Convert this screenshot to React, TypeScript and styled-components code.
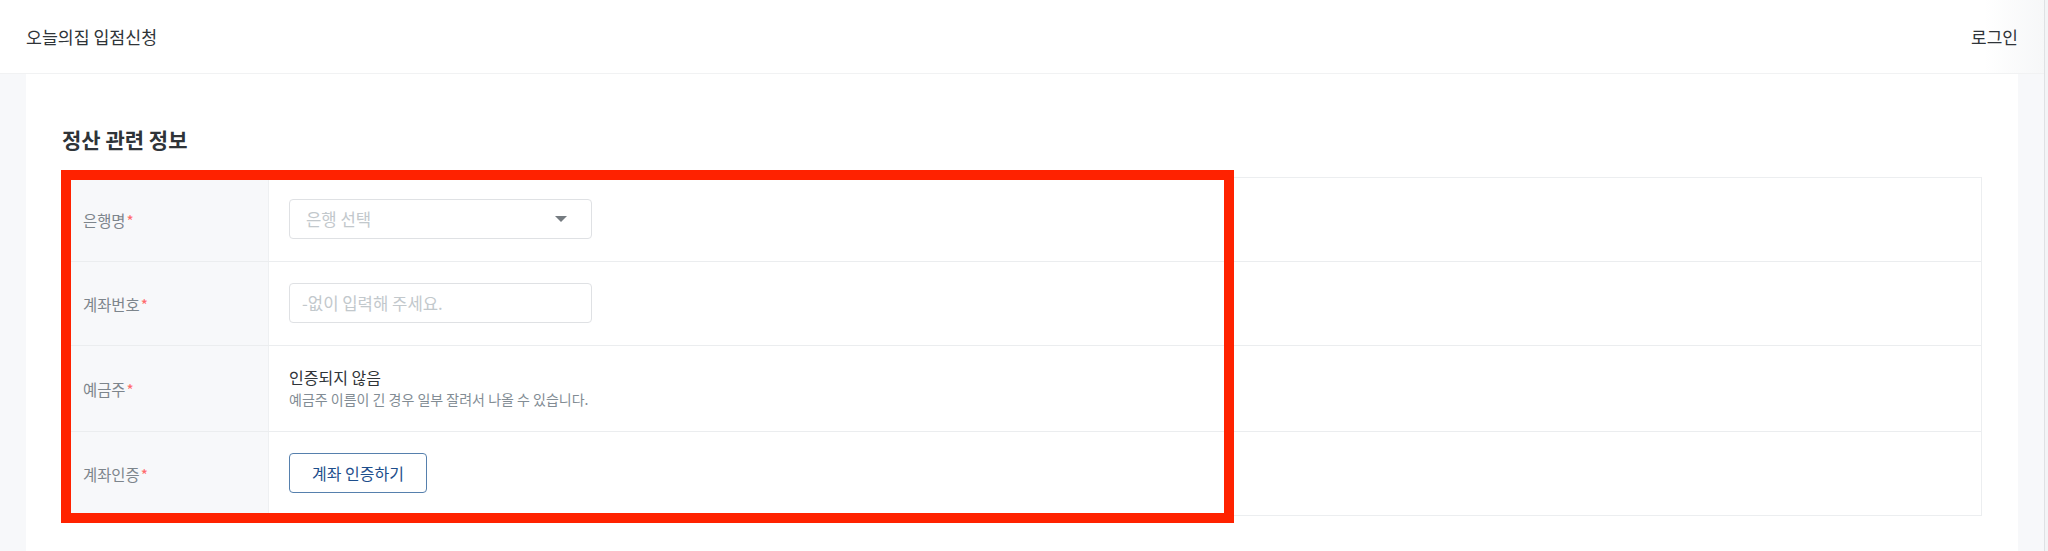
import React from 'react';
import styled, { createGlobalStyle } from 'styled-components';

const GlobalStyle = createGlobalStyle`
  html, body {
    margin: 0;
    padding: 0;
    background: #fff;
  }
  body {
    font-family: 'Noto Sans CJK KR', 'Noto Sans', sans-serif;
    color: #2f3438;
  }
  * {
    box-sizing: border-box;
  }
`;

const Root = styled.div`
  display: flex;
  min-height: 100vh;
`;

const Page = styled.div`
  flex: 1;
  display: flex;
  flex-direction: column;
`;

const Edge = styled.div`
  width: 4px;
  background: #f3f4f6;
  border-left: 1px solid #dfe1e4;
`;

const Header = styled.header`
  height: 74px;
  padding: 0 26px;
  display: flex;
  align-items: center;
  justify-content: space-between;
  background: linear-gradient(to right, #fff 0, #fff calc(100% - 60px), #f6f7f8 100%);
  border-bottom: 1px solid #f1f2f3;
  font-size: 17.3px;
  color: #2f3438;
`;

const HeaderLink = styled.a`
  color: #2f3438;
  text-decoration: none;
  font-size: 17px;
`;

const Main = styled.main`
  flex: 1;
  display: flex;
  background: #f7f8fa;
  padding: 0 26px;
`;

const Panel = styled.section`
  flex: 1;
  background: #fff;
  padding: 51px 36px 0;
`;

const Title = styled.h2`
  margin: 0 0 24px;
  font-size: 21px;
  line-height: 28px;
  font-weight: 700;
  color: #2f3438;
`;

const TableWrap = styled.div`
  position: relative;
`;

const Table = styled.div`
  border: 1px solid #eceef0;
`;

const Row = styled.div`
  display: grid;
  grid-template-columns: 206px 1fr;
  border-bottom: 1px solid #ebedef;
  &:last-child {
    border-bottom: none;
  }
`;

const Label = styled.div`
  display: flex;
  align-items: center;
  padding: 0 20px;
  background: #f7f8fa;
  border-right: 1px solid #eef0f2;
  font-size: 15.4px;
  color: #7d858c;
`;

const Star = styled.span`
  color: #ff6a6a;
  margin-left: 1px;
`;

const Value = styled.div`
  display: flex;
  flex-direction: column;
  justify-content: center;
  align-items: flex-start;
  padding: 21px 20px 22px;
`;

const SelectBox = styled.button`
  width: 303px;
  height: 40px;
  display: flex;
  align-items: center;
  justify-content: space-between;
  padding: 0 24px 0 16px;
  background: #fff;
  border: 1px solid #dfe1e4;
  border-radius: 4px;
  font-family: inherit;
  font-size: 16.7px;
  color: #c2c8cc;
  cursor: pointer;
`;

const TextInput = styled.input`
  width: 303px;
  height: 40px;
  padding: 0 12px;
  border: 1px solid #dfe1e4;
  border-radius: 4px;
  font-family: inherit;
  font-size: 16.7px;
  color: #2f3438;
  outline: none;
  &::placeholder {
    color: #c2c8cc;
  }
`;

const Owner = styled.div`
  font-size: 16px;
  line-height: 21px;
  color: #2f3438;
`;

const Hint = styled.div`
  margin-top: 2px;
  font-size: 14px;
  line-height: 19px;
  color: #828c94;
`;

const VerifyButton = styled.button`
  height: 40px;
  padding: 0 22px;
  background: #fff;
  border: 1px solid #5680ad;
  border-radius: 4px;
  font-family: inherit;
  font-size: 16px;
  color: #1d4e8c;
  cursor: pointer;
`;

const Highlight = styled.div`
  position: absolute;
  top: -7px;
  left: -1px;
  width: 1173px;
  height: 353px;
  border: 10px solid #ff2200;
  pointer-events: none;
`;

const Caret = () => (
  <svg width="12" height="6" viewBox="0 0 12 6">
    <path d="M0 0h12L6 6z" fill="#757b80" />
  </svg>
);

export default function App() {
  return (
    <>
      <GlobalStyle />
      <Root>
        <Page>
          <Header>
            <span>오늘의집 입점신청</span>
            <HeaderLink href="#">로그인</HeaderLink>
          </Header>
          <Main>
            <Panel>
              <Title>정산 관련 정보</Title>
              <TableWrap>
                <Table>
                  <Row>
                    <Label>은행명<Star>*</Star></Label>
                    <Value>
                      <SelectBox type="button">
                        <span>은행 선택</span>
                        <Caret />
                      </SelectBox>
                    </Value>
                  </Row>
                  <Row>
                    <Label>계좌번호<Star>*</Star></Label>
                    <Value>
                      <TextInput placeholder="-없이 입력해 주세요." />
                    </Value>
                  </Row>
                  <Row>
                    <Label>예금주<Star>*</Star></Label>
                    <Value>
                      <Owner>인증되지 않음</Owner>
                      <Hint>예금주 이름이 긴 경우 일부 잘려서 나올 수 있습니다.</Hint>
                    </Value>
                  </Row>
                  <Row>
                    <Label>계좌인증<Star>*</Star></Label>
                    <Value>
                      <VerifyButton type="button">계좌 인증하기</VerifyButton>
                    </Value>
                  </Row>
                </Table>
                <Highlight />
              </TableWrap>
            </Panel>
          </Main>
        </Page>
        <Edge />
      </Root>
    </>
  );
}
